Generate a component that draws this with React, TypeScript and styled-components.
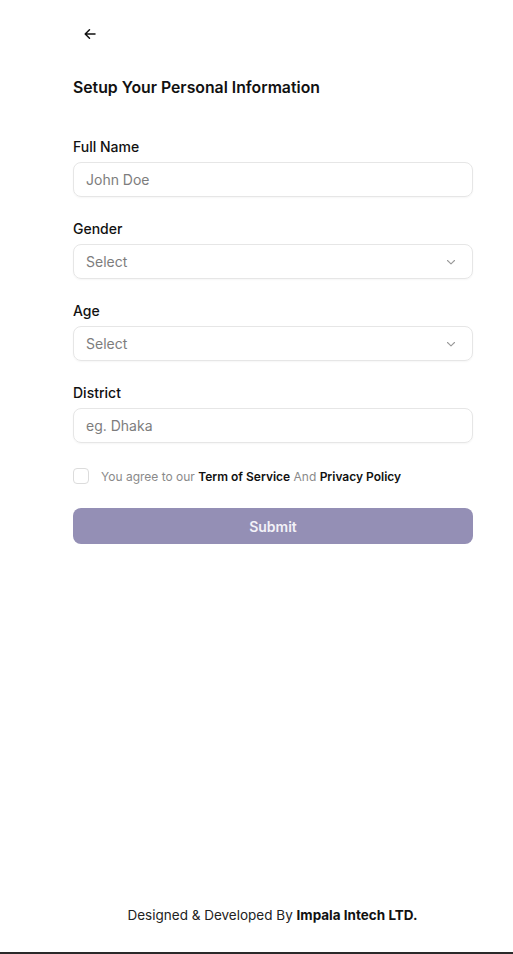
import React from 'react';
import styled, { createGlobalStyle } from 'styled-components';

const GlobalStyle = createGlobalStyle`
  html, body {
    margin: 0;
    padding: 0;
    background: #ffffff;
  }
  body {
    font-family: Inter, 'Noto Sans', sans-serif;
    color: #111111;
  }
  * {
    box-sizing: border-box;
  }
`;

const ArrowLeft = () => (
  <svg width="14" height="14" viewBox="0 0 14 14" fill="none">
    <path d="M12 7H2.5M6.5 2.8L2.2 7l4.3 4.2" stroke="#111" strokeWidth="1.5" strokeLinecap="round" strokeLinejoin="round" />
  </svg>
);

const ChevronDown = () => (
  <svg width="12" height="12" viewBox="0 0 12 12" fill="none">
    <path d="M2.5 4.5L6 7.8l3.5-3.3" stroke="#9a9a9a" strokeWidth="1.1" strokeLinecap="round" strokeLinejoin="round" />
  </svg>
);

const fields: { label: string; placeholder: string; select?: boolean }[] = [
  { label: 'Full Name', placeholder: 'John Doe' },
  { label: 'Gender', placeholder: 'Select', select: true },
  { label: 'Age', placeholder: 'Select', select: true },
  { label: 'District', placeholder: 'eg. Dhaka' },
];

const App = () => {
  return (
    <Page>
      <GlobalStyle />
      <Main>
        <BackButton aria-label="back">
          <ArrowLeft />
        </BackButton>
        <Title>Setup Your Personal Information</Title>
        <Form>
          {fields.map((field) => (
            <Field key={field.label}>
              <Label>{field.label}</Label>
              <InputBox>
                <Placeholder>{field.placeholder}</Placeholder>
                {field.select && <ChevronDown />}
              </InputBox>
            </Field>
          ))}
          <Agree>
            <Checkbox />
            <span>
              You agree to our <b>Term of Service</b> And <b>Privacy Policy</b>
            </span>
          </Agree>
          <SubmitButton>Submit</SubmitButton>
        </Form>
      </Main>
      <Footer>
        Designed &amp; Developed By <b>Impala Intech LTD.</b>
      </Footer>
      <BottomBar />
    </Page>
  );
};

const Page = styled.div`
  width: 513px;
  height: 954px;
  display: flex;
  flex-direction: column;
`;

const Main = styled.main`
  flex: 1;
  padding: 24px 40px 0 73px;
  display: flex;
  flex-direction: column;
`;

const BackButton = styled.button`
  width: 20px;
  height: 20px;
  margin-left: 7px;
  padding: 0;
  border: none;
  background: none;
  display: flex;
  align-items: center;
  justify-content: center;
`;

const Title = styled.h1`
  margin: 33px 0 0;
  font-size: 15.8px;
  font-weight: 600;
  line-height: 22px;
  color: #111;
`;

const Form = styled.div`
  margin-top: 38px;
  display: flex;
  flex-direction: column;
  width: 400px;
`;

const Field = styled.div`
  display: flex;
  flex-direction: column;
  margin-bottom: 22px;
`;

const Label = styled.label`
  font-size: 14px;
  font-weight: 500;
  line-height: 20px;
  color: #111;
  margin-bottom: 5px;
`;

const InputBox = styled.div`
  height: 35px;
  border: 1px solid #e6e6e6;
  border-radius: 8px;
  padding: 0 15px 0 12px;
  display: flex;
  align-items: center;
  justify-content: space-between;
  box-shadow: 0 1px 2px rgba(0, 0, 0, 0.04);
`;

const Placeholder = styled.span`
  font-size: 14px;
  color: #7d7d7d;
`;

const Agree = styled.div`
  display: flex;
  align-items: center;
  gap: 12px;
  margin-top: 3px;
  font-size: 12px;
  color: #8a8a8a;
  b {
    font-weight: 600;
    color: #111;
  }
`;

const Checkbox = styled.span`
  width: 16px;
  height: 16px;
  border: 1px solid #dcdcdc;
  border-radius: 4px;
  flex-shrink: 0;
`;

const SubmitButton = styled.button`
  margin-top: 24px;
  height: 36px;
  width: 100%;
  border: none;
  border-radius: 8px;
  background: #948fb5;
  color: #f3f2f8;
  font-family: Inter, sans-serif;
  font-size: 14px;
  font-weight: 600;
`;

const Footer = styled.footer`
  text-align: center;
  font-size: 13.5px;
  color: #222;
  padding-bottom: 29px;
  padding-left: 32px;
  b {
    font-weight: 700;
    color: #111;
  }
`;

const BottomBar = styled.div`
  height: 2px;
  background: #2a2a2a;
`;

export default App;
